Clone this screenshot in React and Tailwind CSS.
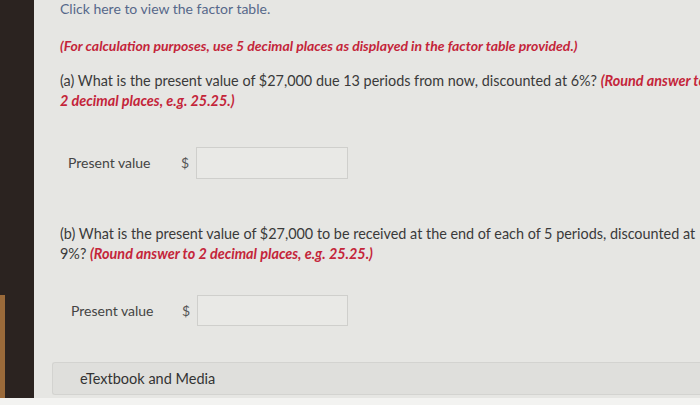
export default function App() {
  return (
    <div className="relative flex h-[405px] w-[700px] overflow-hidden bg-[#e6e6e3] font-['Lato',sans-serif]">
      {/* monitor bezel */}
      <div className="relative w-[34px] shrink-0 bg-[#2b2320]">
        <div className="absolute bottom-0 left-0 h-[110px] w-[5px] bg-[#9a6a3a]" />
      </div>

      <div className="flex flex-1 flex-col">
        <div className="flex flex-1 flex-col pl-[26px] text-[14.4px] leading-[20px] text-[#3a3a3a]">
          <a className="-mt-[1px] text-[14px] text-[#56688a]">Click here to view the factor table.</a>

          <p className="mt-[17px] whitespace-nowrap text-[14px] font-bold italic text-[#c4253a]">
            (For calculation purposes, use 5 decimal places as displayed in the factor table provided.)
          </p>

          <div className="mt-[15px] whitespace-nowrap">
            <div>
              (a) What is the present value of $27,000 due 13 periods from now, discounted at 6%?{" "}
              <span className="font-bold italic text-[#c4253a]">(Round answer to</span>
            </div>
            <div className="font-bold italic text-[#c4253a]">2 decimal places, e.g. 25.25.)</div>
          </div>

          <div className="mt-[36px] flex items-center pl-[8px]">
            <span className="w-[113px] text-[14px] text-[#444]">Present value</span>
            <span className="w-[15px] text-[14px] text-[#555]">$</span>
            <div className="h-[32px] w-[152px] border border-[#cfcfcc] bg-[#e9e9e6]" />
          </div>

          <div className="mt-[45px] whitespace-nowrap">
            <div>
              (b) What is the present value of $27,000 to be received at the end of each of 5 periods, discounted at
            </div>
            <div>
              9%? <span className="font-bold italic text-[#c4253a]">(Round answer to 2 decimal places, e.g. 25.25.)</span>
            </div>
          </div>

          <div className="mt-[31px] flex items-center pl-[11px]">
            <span className="w-[111px] text-[14px] text-[#444]">Present value</span>
            <span className="w-[15px] text-[14px] text-[#555]">$</span>
            <div className="h-[31px] w-[151px] border border-[#cfcfcc] bg-[#e9e9e6]" />
          </div>
        </div>

        <div className="mb-[10px] ml-[18px] flex h-[33px] items-center rounded-l-[3px] border border-r-0 border-[#d3d3d0] bg-[#dfdfdc] pl-[27px] text-[14.5px] text-[#333]">
          eTextbook and Media
        </div>
      </div>

      <div className="absolute bottom-0 left-0 h-[7px] w-full bg-[#f3f3f1]" />
    </div>
  );
}
